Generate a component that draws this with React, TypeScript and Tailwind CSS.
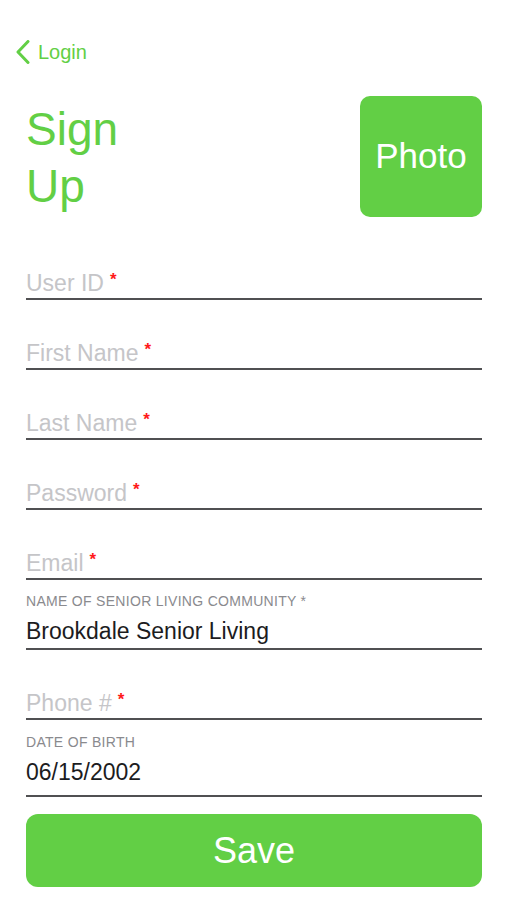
import { ReactNode } from "react";

const font = { fontFamily: '"Liberation Sans", Arial, sans-serif' };

function Required() {
  return (
    <span className="ml-[6px] align-top text-[17px] font-bold leading-[20px] text-[#ff1a1a]">
      *
    </span>
  );
}

function PlainField({ label }: { label: string }) {
  return (
    <div className="border-b-2 border-[#505052] pt-[40px] pb-[2px]">
      <div className="h-[26px] text-[23px] leading-[26px] text-[#c5c5c8]">
        {label}
        <Required />
      </div>
    </div>
  );
}

function LabeledField({
  label,
  value,
  className,
}: {
  label: ReactNode;
  value: string;
  className: string;
}) {
  return (
    <div className={`border-b-2 border-[#505052] ${className}`}>
      <div className="text-[14px] leading-[18px] tracking-[0.3px] text-[#8a8a8e]">
        {label}
      </div>
      <div className="mt-[7px] text-[23px] leading-[28px] text-[#1c1c1e]">
        {value}
      </div>
    </div>
  );
}

export default function App() {
  return (
    <div className="min-h-[900px] w-[507px] bg-white pl-[26px] pr-[25px] pt-[40px]" style={font}>
      <div className="-ml-[10px] flex h-[24px] items-center gap-[8px] text-[#62cf45]">
        <svg width="14" height="24" viewBox="0 0 14 24" fill="none">
          <path
            d="M12 1.5 L2 12 L12 22.5"
            stroke="currentColor"
            strokeWidth="3"
            strokeLinecap="round"
            strokeLinejoin="round"
          />
        </svg>
        <span className="text-[20px] leading-[24px]">Login</span>
      </div>

      <div className="mt-[32px] flex items-start justify-between">
        <h1 className="mt-[5px] text-[46px] font-normal leading-[57px] text-[#62cf45]">
          Sign
          <br />
          Up
        </h1>
        <button className="flex h-[121px] w-[122px] items-center justify-center rounded-[10px] bg-[#62cf45] text-[35px] text-white">
          Photo
        </button>
      </div>

      <div className="mt-[13px]">
        <PlainField label="User ID" />
        <PlainField label="First Name" />
        <PlainField label="Last Name" />
        <PlainField label="Password" />
        <PlainField label="Email" />
        <LabeledField
          className="pt-[12px] pb-[3px]"
          label="NAME OF SENIOR LIVING COMMUNITY *"
          value="Brookdale Senior Living"
        />
        <PlainField label="Phone #" />
        <LabeledField
          className="pt-[13px] pb-[9px]"
          label="DATE OF BIRTH"
          value="06/15/2002"
        />
      </div>

      <button className="mt-[17px] flex h-[73px] w-full items-center justify-center rounded-[12px] bg-[#62cf45] text-[36px] text-white">
        Save
      </button>
    </div>
  );
}
